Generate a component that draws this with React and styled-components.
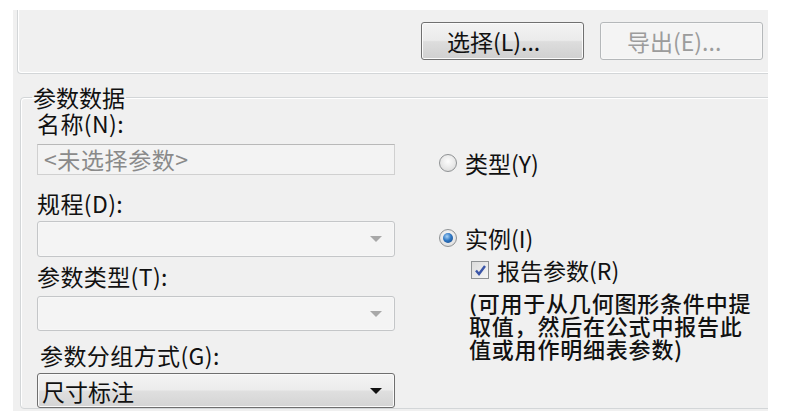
import React from 'react';
import styled, { createGlobalStyle } from 'styled-components';

const GlobalStyle = createGlobalStyle`
html, body {
  margin: 0;
  padding: 0;
  background: #ffffff;
}
body {
  font-family: "Noto Sans CJK SC", "Noto Sans", sans-serif;
  color: #111;
}
`

const Page = styled.div`
margin: 10px 0 0 13px;
width: 755px;
height: 401px;
background: #f0f0f0;
overflow: hidden;`

const TopGroup = styled.div`
margin-left: 4px;
width: 900px;
height: 64px;
box-sizing: border-box;
border-left: 1px solid #d3d6d8;
border-bottom: 1px solid #d3d6d8;
border-bottom-left-radius: 4px;
box-shadow: inset 1px -1px 0 #ffffff;
display: flex;
gap: 16px;
padding: 12px 0 0 403px;`

const Button = styled.div`
width: 163px;
height: 38px;
box-sizing: border-box;
border-radius: 3px;
display: flex;
align-items: center;
padding-left: ${p => p.disabled ? 26 : 25}px;
font-size: 23px;
line-height: 1;
border: 1px solid ${p => p.disabled ? '#b5b8ba' : '#707070'};
color: ${p => p.disabled ? '#9c9c9c' : '#111'};
background: ${p => p.disabled
  ? '#f4f4f4'
  : 'linear-gradient(#f3f3f3 0%, #ebebeb 48%, #dddddd 52%, #d0d0d0 100%)'};
box-shadow: inset 0 0 0 1px ${p => p.disabled ? '#f8f8f8' : '#fbfbfb'};`

const Group = styled.fieldset`
margin: 11px 0 0 7px;
width: 900px;
padding: 0 0 0 16px;
border: 1px solid #d3d6d8;
border-radius: 4px;
box-shadow: inset 1px 1px 0 #ffffff;
display: flex;
gap: 44px;`

const Legend = styled.legend`
margin-left: -5px;
padding: 0 1px;
font-size: 23px;
line-height: 24px;`

const LeftCol = styled.div`
width: 358px;
display: flex;
flex-direction: column;`

const Label = styled.div`
margin-top: ${p => p.$top || 0}px;
padding-left: ${p => p.$indent || 0}px;
font-size: 23px;
line-height: 28px;
height: 28px;
white-space: nowrap;
letter-spacing: 0.4px;`

const TextBox = styled.div`
margin-top: ${p => p.$top || 0}px;
height: 31px;
box-sizing: border-box;
border: 1px solid #d0d0d0;
border-top-color: #b8b8b8;
background: #f3f3f3;
color: #8a8a8a;
font-size: 23px;
line-height: 28px;
padding-left: 6px;
letter-spacing: 0.6px;`

const Select = styled.div`
margin-top: ${p => p.$top || 0}px;
height: ${p => p.$h || 35}px;
box-sizing: border-box;
border-radius: 3px;
display: flex;
align-items: center;
justify-content: space-between;
padding: 0 12px 0 4px;
font-size: 23px;
border: 1px solid ${p => p.$active ? '#6f6f6f' : '#c4c6c8'};
background: ${p => p.$active
  ? 'linear-gradient(#f4f4f4 0%, #ececec 48%, #dfdfdf 52%, #d4d4d4 100%)'
  : '#f4f4f4'};
box-shadow: inset 0 0 0 1px ${p => p.$active ? '#fafafa' : '#f7f7f7'};`

const Arrow = styled.span`
width: 0;
height: 0;
border-left: 6px solid transparent;
border-right: 6px solid transparent;
border-top: 6px solid ${p => p.$active ? '#111' : '#a8a8a8'};`

const RightCol = styled.div`
display: flex;
flex-direction: column;`

const OptionRow = styled.div`
margin-top: ${p => p.$top || 0}px;
margin-left: ${p => p.$indent || 0}px;
display: flex;
align-items: center;
gap: 8px;
font-size: 23px;
line-height: 28px;
white-space: nowrap;`

const Radio = styled.span`
flex-shrink: 0;
width: 18px;
height: 18px;
box-sizing: border-box;
border-radius: 50%;
border: 1px solid #8f9294;
background: radial-gradient(circle at 50% 40%, #fdfdfd 0%, #e6e6e6 60%, #d2d2d2 100%);
display: flex;
align-items: center;
justify-content: center;
&::after {
  content: '';
  display: ${p => p.$checked ? 'block' : 'none'};
  width: 10px;
  height: 10px;
  border-radius: 50%;
  background: radial-gradient(circle at 40% 35%, #a9d2f5 0%, #2f78c4 45%, #123f7d 100%);
}`

const Check = styled.span`
flex-shrink: 0;
width: 18px;
height: 18px;
box-sizing: border-box;
border: 1px solid #8f9294;
background: linear-gradient(135deg, #dcdcdc 0%, #f6f6f6 100%);
display: flex;
align-items: center;
justify-content: center;`

const Note = styled.div`
margin: 7px 0 0 30px;
font-size: 22px;
line-height: 23px;
font-weight: 500;
letter-spacing: 0.8px;`

export default function App() {
  return (
    <>
      <GlobalStyle />
      <Page>
        <TopGroup>
          <Button>选择(L)...</Button>
          <Button disabled>导出(E)...</Button>
        </TopGroup>
        <Group>
          <Legend>参数数据</Legend>
          <LeftCol>
            <Label>名称(N):</Label>
            <TextBox $top={7}>&lt;未选择参数&gt;</TextBox>
            <Label $top={14}>规程(D):</Label>
            <Select $top={4} $h={36}><span /><Arrow /></Select>
            <Label $top={5}>参数类型(T):</Label>
            <Select $top={6}><span /><Arrow /></Select>
            <Label $top={10} $indent={3}>参数分组方式(G):</Label>
            <Select $top={4} $active>尺寸标注<Arrow $active /></Select>
          </LeftCol>
          <RightCol>
            <OptionRow $top={40}><Radio />类型(Y)</OptionRow>
            <OptionRow $top={47}><Radio $checked />实例(I)</OptionRow>
            <OptionRow $top={4} $indent={32}>
              <Check>
                <svg width="13" height="13" viewBox="0 0 13 13">
                  <path d="M2 6.5 L5 10 L11 2" fill="none" stroke="#3a55a8" strokeWidth="2.4" />
                </svg>
              </Check>
              报告参数(R)
            </OptionRow>
            <Note>
              (可用于从几何图形条件中提<br />
              取值，然后在公式中报告此<br />
              值或用作明细表参数)
            </Note>
          </RightCol>
        </Group>
      </Page>
    </>
  );
}
